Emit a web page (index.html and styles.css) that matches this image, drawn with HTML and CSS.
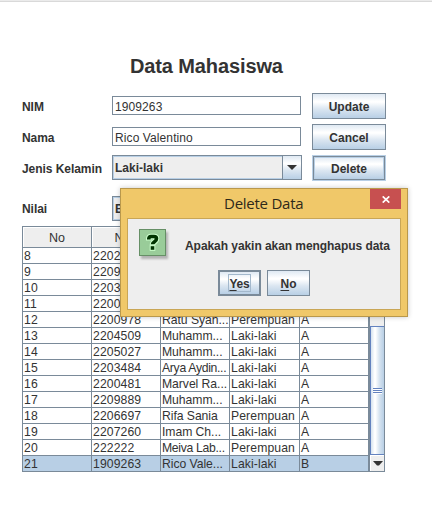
FILE: index.html
```html
<!DOCTYPE html>
<html lang="id">
<head>
<meta charset="utf-8">
<title>Data Mahasiswa</title>
<link rel="stylesheet" href="styles.css">
</head>
<body>
<main class="window">
  <h1>Data Mahasiswa</h1>
  <form class="form">
    <div class="row">
      <label>NIM</label><div class="field">1909263</div><button type="button" class="btn">Update</button>
    </div>
    <div class="row">
      <label>Nama</label><div class="field">Rico Valentino</div><button type="button" class="btn">Cancel</button>
    </div>
    <div class="row">
      <label>Jenis Kelamin</label>
      <div class="combo"><span>Laki-laki</span><i class="arrow"><svg width="10" height="5" viewBox="0 0 10 5"><path fill="#333" d="M0 0h10L5 5z"/></svg></i></div>
      <button type="button" class="btn default">Delete</button>
    </div>
    <div class="row grade">
      <label>Nilai</label>
      <div class="combo"><span>B</span><i class="arrow"></i></div>
    </div>
  </form>
  <div class="pane">
    <table>
      <thead><tr><th>No</th><th>NIM</th><th></th><th></th><th></th></tr></thead>
      <tbody>
        <tr><td>8</td><td>2202</td><td></td><td></td><td></td></tr>
        <tr><td>9</td><td>2209</td><td></td><td></td><td></td></tr>
        <tr><td>10</td><td>2203</td><td></td><td></td><td></td></tr>
        <tr><td>11</td><td>2200</td><td></td><td></td><td></td></tr>
        <tr><td>12</td><td>2200978</td><td>Ratu Syah...</td><td>Perempuan</td><td>A</td></tr>
        <tr><td>13</td><td>2204509</td><td>Muhamm...</td><td>Laki-laki</td><td>A</td></tr>
        <tr><td>14</td><td>2205027</td><td>Muhamm...</td><td>Laki-laki</td><td>A</td></tr>
        <tr><td>15</td><td>2203484</td><td class="tight">Arya Aydin...</td><td>Laki-laki</td><td>A</td></tr>
        <tr><td>16</td><td>2200481</td><td>Marvel Ra...</td><td>Laki-laki</td><td>A</td></tr>
        <tr><td>17</td><td>2209889</td><td>Muhamm...</td><td>Laki-laki</td><td>A</td></tr>
        <tr><td>18</td><td>2206697</td><td>Rifa Sania</td><td>Perempuan</td><td>A</td></tr>
        <tr><td>19</td><td>2207260</td><td>Imam Ch...</td><td>Laki-laki</td><td>A</td></tr>
        <tr><td>20</td><td>222222</td><td class="tight">Meiva Lab...</td><td>Perempuan</td><td>A</td></tr>
        <tr class="selected"><td>21</td><td>1909263</td><td>Rico Vale...</td><td>Laki-laki</td><td>B</td></tr>
      </tbody>
    </table>
    <div class="scroll">
      <div class="track"></div>
      <div class="thumb"><svg width="10" height="6" viewBox="0 0 10 6" shape-rendering="crispEdges"><path fill="#fff" d="M0 1h9v1H0zM0 3h9v1H0zM0 5h9v1H0z"/><path fill="#6382bf" d="M0 0h9v1H0zM0 2h9v1H0zM0 4h9v1H0z"/></svg></div>
      <div class="down"><svg width="10" height="5" viewBox="0 0 10 5"><path fill="#333" d="M0 0h10L6 4.500H4z"/></svg></div>
    </div>
  </div>
</main>
<section class="dialog" role="dialog">
  <header><h2>Delete Data</h2>
    <span class="close"><svg width="8" height="7" viewBox="0 0 8 7"><path d="M.7.400L7.300 6.600M7.300.400L.7 6.600" stroke="#fff" stroke-width="1.700"/></svg></span>
  </header>
  <div class="content">
    <div class="message">
      <svg class="question" width="27" height="27" viewBox="0 0 27 27">
        <rect x=".5" y=".5" width="26" height="26" fill="#99cc99" stroke="#668f66"/>
        <g fill="none" stroke="#ccffcc" stroke-width="5.600"><path d="M9.800 11.500V9.500Q10 7.500 12 7.500H15Q17.500 7.500 17.500 9.800Q17.500 11.500 15.500 12.800Q13.500 14 13.500 16.200"/><path d="M10.700 19h5.600"/></g>
        <g fill="none" stroke="#003300" stroke-width="3.600"><path d="M9.800 10.500V9.700Q10 7.500 12 7.500H15Q17.500 7.500 17.500 9.800Q17.500 11.500 15.500 12.700Q13.500 14 13.500 15.300"/><path d="M11.700 19h3.600"/></g>
      </svg>
      <p>Apakah yakin akan menghapus data</p>
    </div>
    <div class="actions">
      <button type="button" class="btn focus"><span><u>Y</u>es</span></button>
      <button type="button" class="btn"><span><u>N</u>o</span></button>
    </div>
  </div>
</section>
</body>
</html>
```
FILE: styles.css
```css
* { box-sizing: border-box; }
body {
  margin: 0;
  width: 432px;
  height: 522px;
  overflow: hidden;
  background: #fff;
  color: #333;
  font: 12px/16px "Liberation Sans", Arial, sans-serif;
}
.window {
  height: 522px;
  padding: 0 0 0 22px;
  border-top: 1px solid #ebebeb;
  box-shadow: inset 0 1px #d9d9d9;
}
h1 {
  margin: 0;
  padding: 53px 0 0 108px;
  height: 92px;
  font-size: 20px;
  line-height: 24px;
  letter-spacing: -.12px;
}
.row { display: flex; align-items: flex-start; height: 26px; margin-bottom: 5px; }
.row label { width: 90px; font-weight: bold; padding-top: 6px; white-space: nowrap; letter-spacing: -.05px; }
.field {
  width: 189px;
  height: 19px;
  margin: 3px 11px 0 0;
  padding: 1px 0 0 2px;
  border: 1px solid #7a8a99;
  line-height: 18px;
  letter-spacing: .1px;
}
.btn {
  width: 74px;
  height: 26px;
  padding: 2px 0 0;
  border: 1px solid #7a8a99;
  border-radius: 0;
  background: linear-gradient(#dfe9f3, #fff 30%, #fff 34%, #dbe6f1 62%, #b8cfe5);
  color: #333;
  font: bold 12px/16px "Liberation Sans", Arial, sans-serif;
}
.btn.default {
  width: 72px;
  height: 24px;
  margin: 1px 0 0 1px;
  box-shadow: inset 0 0 0 1px #b8cfe5, 0 0 0 1px #b8cfe5;
}
.combo {
  display: flex;
  width: 190px;
  height: 25px;
  margin-right: 10px;
  border: 1px solid #7a8a99;
  background: #eee;
  box-shadow: inset 0 0 0 1px #b8cfe5;
  font-weight: bold;
  line-height: 24px;
}
.combo span { flex: 1; padding-left: 2px; }
.arrow {
  display: flex;
  align-items: center;
  justify-content: center;
  width: 19px;
  border-left: 1px solid #7a8a99;
  background: linear-gradient(#dfe9f3, #fff 32%, #dbe6f1 62%, #b8cfe5);
}
.row.grade { margin: 15px 0 0; height: 25px; }
.row.grade label { padding-top: 5px; }
.pane { display: flex; width: 363px; height: 246px; margin-top: 5px; border: 1px solid #7a8a99; border-bottom: 0; }
table { width: 346px; table-layout: fixed; border-collapse: separate; border-spacing: 0; }
th, td { padding: 0; border: 0 solid #7a8a99; border-width: 0 1px 1px 0; font-weight: normal; overflow: hidden; white-space: nowrap; }
th { height: 21px; padding-top: 2px; line-height: 18px; background: #eee; box-shadow: inset 1px 1px #fff; font-size: 12.500px; }
td { height: 16px; padding: 2px 0 0 1px; line-height: 13px; font-size: 12.200px; letter-spacing: .1px; }
td:nth-child(3) { letter-spacing: -.05px; }
td.tight { letter-spacing: -.3px; }
th:nth-child(1), th:nth-child(2), th:nth-child(3) { width: 69px; }
th:nth-child(4) { width: 70px; }
.selected td { background: #b8cfe5; }
.scroll { display: flex; flex-direction: column; width: 15px; border-left: 1px solid #7a8a99; border-bottom: 1px solid #7a8a99; background: #eee; }
.track { height: 99px; }
.thumb {
  display: flex;
  align-items: center;
  justify-content: center;
  height: 129px;
  border: 1px solid #6382bf;
  border-right: 0;
  background: linear-gradient(90deg, #d5e2ef, #fff 28%, #fff 34%, #d6e3f0 65%, #b8cfe5);
}
.down { display: flex; flex: 1; align-items: center; justify-content: center; border: 1px solid #fff; border-width: 1px 0 0 1px; }
.dialog {
  position: absolute;
  left: 120px;
  top: 188px;
  width: 288px;
  height: 129px;
  padding: 0 6px 6px;
  border: 1px solid #b9984c;
  background: #f0c869;
  box-shadow: 0 0 5px rgba(0, 0, 0, .22);
}
.dialog header { display: flex; justify-content: space-between; height: 29px; }
h2 {
  margin: 0;
  padding-left: 97px;
  font: 15px/29px "Open Sans", sans-serif;
  color: #2e2919;
  letter-spacing: -.25px;
}
.close { display: flex; align-items: center; justify-content: center; width: 31px; height: 20px; background: #c75050; }
.content { height: 92px; border: 1px solid #c9a656; background: #eee; padding: 10px 0 0 11px; }
.message { display: flex; }
.question { display: block; filter: drop-shadow(2px 3px 1px rgba(0, 0, 0, .25)); }
.message p { margin: 9px 0 0 19px; font-weight: bold; white-space: nowrap; letter-spacing: -.06px; }
.actions { display: flex; gap: 6px; margin: 14px 0 0 79px; }
.actions .btn { width: 43px; }
.actions .focus { border-width: 2px; padding: 0; }
.focus span { display: block; width: 23px; height: 18px; margin: 0 auto; border: 1px solid #a3b8cc; line-height: 18px; letter-spacing: -.2px; }
.actions u { text-underline-offset: 2px; }
```
